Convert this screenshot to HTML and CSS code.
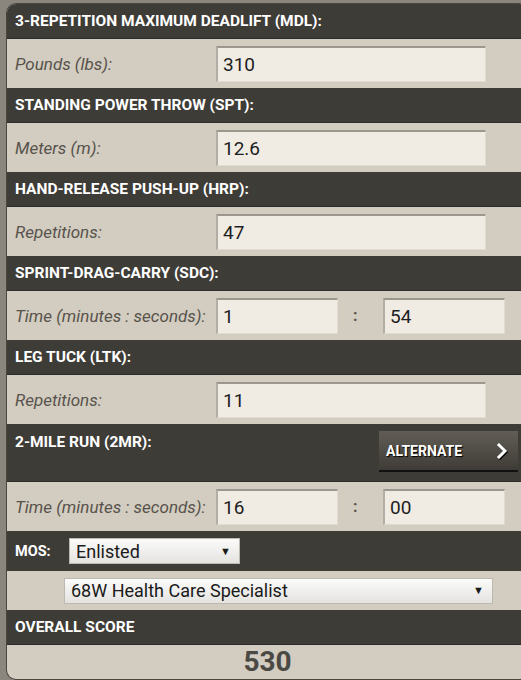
FILE: index.html
```html
<!DOCTYPE html>
<html>
<head>
<meta charset="utf-8">
<link rel="stylesheet" href="styles.css">
</head>
<body>
<div class="panel">
  <div class="hdr">3-REPETITION MAXIMUM DEADLIFT (MDL):</div>
  <div class="row"><span class="lbl">Pounds (lbs):</span><span class="inp wide">310</span></div>
  <div class="hdr">STANDING POWER THROW (SPT):</div>
  <div class="row"><span class="lbl">Meters (m):</span><span class="inp wide">12.6</span></div>
  <div class="hdr">HAND-RELEASE PUSH-UP (HRP):</div>
  <div class="row"><span class="lbl">Repetitions:</span><span class="inp wide">47</span></div>
  <div class="hdr">SPRINT-DRAG-CARRY (SDC):</div>
  <div class="row"><span class="lbl">Time (minutes : seconds):</span><span class="inp half">1</span><span class="colon">:</span><span class="inp half">54</span></div>
  <div class="hdr">LEG TUCK (LTK):</div>
  <div class="row"><span class="lbl">Repetitions:</span><span class="inp wide">11</span></div>
  <div class="hdr tall">
    <span class="hdr-text">2-MILE RUN (2MR):</span>
    <span class="alt-btn">ALTERNATE<svg class="chev" width="12" height="16" viewBox="0 0 12 16"><path d="M3 2 L9 8 L3 14" fill="none" stroke="#fff" stroke-width="3" stroke-linecap="square"/></svg></span>
  </div>
  <div class="row"><span class="lbl">Time (minutes : seconds):</span><span class="inp half">16</span><span class="colon">:</span><span class="inp half">00</span></div>
  <div class="mos-row"><span class="mos-lbl">MOS:</span><span class="sel sel-small">Enlisted<span class="arrow">▼</span></span></div>
  <div class="row2"><span class="sel sel-big">68W Health Care Specialist<span class="arrow">▼</span></span></div>
  <div class="hdr">OVERALL SCORE</div>
  <div class="score">530</div>
</div>
</body>
</html>
```
FILE: styles.css
```css
html, body {
  margin: 0;
  padding: 0;
  background: #8a867e;
  overflow: hidden;
  width: 521px;
  height: 680px;
}
body {
  font-family: Roboto, "Liberation Sans", sans-serif;
}
.panel {
  margin: 4px 0 0 7px;
  width: 521px;
  background: #d3ccc0;
  border-radius: 9px;
  overflow: hidden;
  box-shadow: 0 0 0 1px #4a4740;
  padding-bottom: 2px;
}
.hdr {
  height: 35px;
  background: #3e3c37;
  color: #fff;
  font-weight: bold;
  font-size: 15.5px;
  display: flex;
  align-items: center;
  padding-left: 8px;
  border-bottom: 1px solid #2e2c28;
  box-sizing: border-box;
}
.hdr.tall {
  height: 58px;
  align-items: flex-start;
  justify-content: space-between;
  padding-top: 10px;
  padding-right: 10px;
}
.hdr-text {
  line-height: 16px;
}
.alt-btn {
  margin-top: -3px;
  width: 139px;
  height: 41px;
  box-sizing: border-box;
  background: linear-gradient(#615d56, #3f3c37);
  border-bottom: 2px solid #111;
  display: flex;
  align-items: center;
  justify-content: space-between;
  padding: 0 10px 0 7px;
  font-size: 14px;
  text-shadow: 1px 1px 1px #000;
}
.chev {
  filter: drop-shadow(1px 1px 0 #000);
}
.row {
  height: 49px;
  display: flex;
  align-items: center;
  padding-left: 8px;
}
.lbl {
  width: 201px;
  font-style: italic;
  font-size: 17px;
  color: #57534c;
}
.inp {
  height: 36px;
  box-sizing: border-box;
  background: #f0ece4;
  border-top: 2px solid #9c978e;
  border-left: 2px solid #b3aea5;
  border-right: 1px solid #e0dbd2;
  border-bottom: 1px solid #e0dbd2;
  font-size: 19px;
  color: #1e1e1e;
  padding-left: 5px;
  display: flex;
  align-items: center;
}
.inp.wide { width: 270px; }
.inp.half { width: 122px; }
.colon {
  width: 45px;
  box-sizing: border-box;
  padding-left: 15px;
  font-weight: bold;
  font-size: 16px;
  color: #57534c;
}
.mos-row {
  height: 40px;
  background: #3e3c37;
  display: flex;
  align-items: center;
  padding-left: 8px;
}
.mos-lbl {
  color: #fff;
  font-weight: bold;
  font-size: 14.5px;
  width: 54px;
}
.sel {
  box-sizing: border-box;
  background: linear-gradient(#fbfbfa, #e4e3e0);
  border: 1px solid #bdb9b0;
  font-size: 18px;
  color: #1a1a1a;
  display: flex;
  align-items: center;
  justify-content: space-between;
  padding: 0 8px 0 6px;
}
.sel-small {
  width: 171px;
  height: 26px;
}
.sel-big {
  width: 429px;
  height: 26px;
}
.arrow {
  font-size: 11px;
}
.row2 {
  height: 39px;
  display: flex;
  align-items: center;
  padding-left: 57px;
}
.score {
  height: 32px;
  display: flex;
  align-items: center;
  justify-content: center;
  font-size: 28px;
  font-weight: bold;
  color: #4b4944;
}
```
